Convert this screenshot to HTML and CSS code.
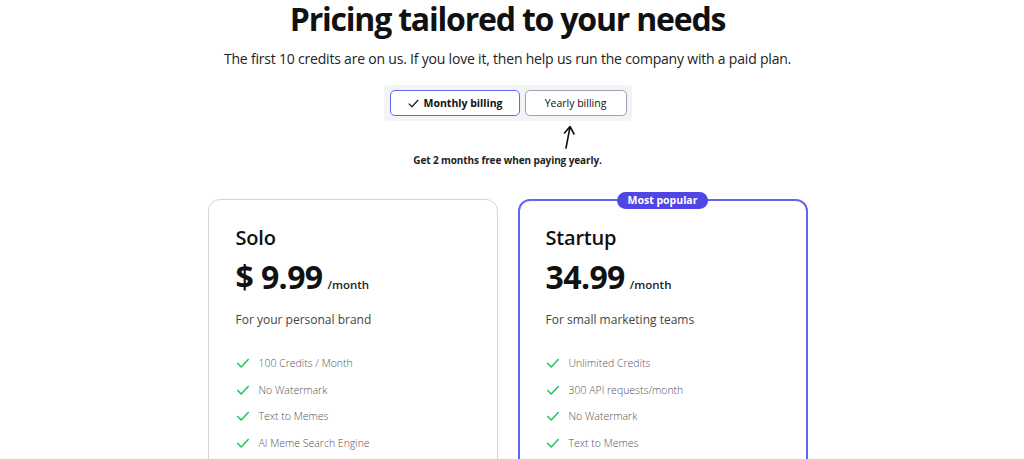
FILE: index.html
```html
<!DOCTYPE html>
<html lang="en">
<head>
<meta charset="utf-8">
<title>Pricing</title>
<link rel="stylesheet" href="styles.css">
</head>
<body>
<main class="page">
  <h1 class="title">Pricing tailored to your needs</h1>
  <p class="subtitle">The first 10 credits are on us. If you love it, then help us run the company with a paid plan.</p>

  <div class="toggle">
    <button class="toggle-btn active">
      <svg class="tick" viewBox="0 0 16 16" width="13" height="13"><path d="M2.5 8.5l3.5 3.5 7.5-8" fill="none" stroke="#111" stroke-width="1.4" stroke-linecap="round" stroke-linejoin="round"/></svg>
      Monthly billing
    </button>
    <button class="toggle-btn">Yearly billing</button>
  </div>

  <div class="hint">
    <svg class="arrow" viewBox="0 0 20 26" width="20" height="26"><path d="M7 24 L11 3 M5.5 9 L11 2.5 L15 10" fill="none" stroke="#111" stroke-width="1.6" stroke-linecap="round" stroke-linejoin="round"/></svg>
    <p class="hint-text">Get 2 months free when paying yearly.</p>
  </div>

  <section class="plans">
    <article class="card">
      <h2 class="plan-name">Solo</h2>
      <div class="price"><span class="amount">$ 9.99</span><span class="per">/month</span></div>
      <p class="desc">For your personal brand</p>
      <ul class="features">
        <li><svg class="check" viewBox="0 0 16 16"><path d="M2 8.5l4 4 8-8.5" /></svg>100 Credits / Month</li>
        <li><svg class="check" viewBox="0 0 16 16"><path d="M2 8.5l4 4 8-8.5" /></svg>No Watermark</li>
        <li><svg class="check" viewBox="0 0 16 16"><path d="M2 8.5l4 4 8-8.5" /></svg>Text to Memes</li>
        <li><svg class="check" viewBox="0 0 16 16"><path d="M2 8.5l4 4 8-8.5" /></svg>AI Meme Search Engine</li>
        <li><svg class="check" viewBox="0 0 16 16"><path d="M2 8.5l4 4 8-8.5" /></svg>Meme Templates</li>
      </ul>
    </article>
    <article class="card popular">
      <span class="badge">Most popular</span>
      <h2 class="plan-name">Startup</h2>
      <div class="price"><span class="amount">34.99</span><span class="per">/month</span></div>
      <p class="desc">For small marketing teams</p>
      <ul class="features">
        <li><svg class="check" viewBox="0 0 16 16"><path d="M2 8.5l4 4 8-8.5" /></svg>Unlimited Credits</li>
        <li><svg class="check" viewBox="0 0 16 16"><path d="M2 8.5l4 4 8-8.5" /></svg>300 API requests/month</li>
        <li><svg class="check" viewBox="0 0 16 16"><path d="M2 8.5l4 4 8-8.5" /></svg>No Watermark</li>
        <li><svg class="check" viewBox="0 0 16 16"><path d="M2 8.5l4 4 8-8.5" /></svg>Text to Memes</li>
        <li><svg class="check" viewBox="0 0 16 16"><path d="M2 8.5l4 4 8-8.5" /></svg>AI Meme Search Engine</li>
      </ul>
    </article>
  </section>
</main>
</body>
</html>
```

FILE: styles.css
```css
* { box-sizing: border-box; }
html, body { margin: 0; padding: 0; background: #fff; }
body {
  font-family: "Open Sans", "Noto Sans", "Liberation Sans", sans-serif;
  color: #111;
}
.page {
  display: flex;
  flex-direction: column;
  align-items: center;
  padding: 0 9px 200px 0;
}
.title {
  margin: -1px 0 0;
  font-size: 32px;
  line-height: 40px;
  font-weight: 700;
  letter-spacing: -1.2px;
  color: #111;
}
.subtitle {
  margin: 10px 0 0;
  font-size: 14px;
  line-height: 20px;
  font-weight: 500;
  color: #222;
  letter-spacing: -0.2px;
}
.toggle {
  margin-top: 16px;
  display: flex;
  gap: 5px;
  padding: 5px 5px 5px 6px;
  background: #f3f4f6;
  border-radius: 4px;
}
.toggle-btn {
  font-family: inherit;
  height: 26px;
  width: 102px;
  display: flex;
  align-items: center;
  justify-content: center;
  gap: 4px;
  background: #fff;
  border: 1.5px solid #9ca3af;
  border-radius: 5px;
  font-size: 10.5px;
  font-weight: 500;
  color: #111;
  padding: 0;
}
.toggle-btn.active {
  width: 130px;
  border-color: #6366f1;
  font-weight: 700;
}
.tick { display: block; }
.hint {
  display: flex;
  flex-direction: column;
  align-items: center;
}
.arrow {
  display: block;
  margin: 3px 0 0 124px;
}
.hint-text {
  margin: 3px 0 0;
  font-size: 10px;
  line-height: 14px;
  font-weight: 700;
  color: #222;
  letter-spacing: -0.1px;
}
.plans {
  margin-top: 32px;
  display: flex;
  gap: 20px;
}
.card {
  position: relative;
  width: 290px;
  height: 420px;
  border: 1px solid #d4d4d8;
  border-radius: 12px;
  padding: 24px 27px;
}
.card.popular {
  border: 2px solid #6366f1;
  padding: 23px 26px;
}
.badge {
  position: absolute;
  top: -9px;
  left: 50%;
  transform: translateX(-50%);
  background: #4f46e5;
  color: #fff;
  font-size: 10.5px;
  font-weight: 700;
  line-height: 17px;
  padding: 0 11px;
  border-radius: 9px;
  white-space: nowrap;
}
.plan-name {
  margin: 0;
  font-size: 20px;
  line-height: 28px;
  font-weight: 600;
  letter-spacing: -0.2px;
}
.price {
  margin-top: 4px;
  display: flex;
  align-items: baseline;
  gap: 5px;
}
.amount {
  font-size: 32px;
  line-height: 42px;
  font-weight: 700;
  letter-spacing: -0.6px;
}
.per {
  font-size: 11.5px;
  font-weight: 600;
  color: #222;
}
.desc {
  margin: 13px 0 0;
  font-size: 12px;
  line-height: 18px;
  color: #444;
}
.features {
  list-style: none;
  margin: 26px 0 0;
  padding: 0;
  display: flex;
  flex-direction: column;
  gap: 10.7px;
}
.features li {
  display: flex;
  align-items: center;
  gap: 9px;
  font-size: 10.5px;
  line-height: 16px;
  font-weight: 300;
  color: #555;
}
.check {
  width: 14px;
  height: 14px;
  flex: none;
  fill: none;
  stroke: #22c55e;
  stroke-width: 1.8;
  stroke-linecap: round;
  stroke-linejoin: round;
}
```
